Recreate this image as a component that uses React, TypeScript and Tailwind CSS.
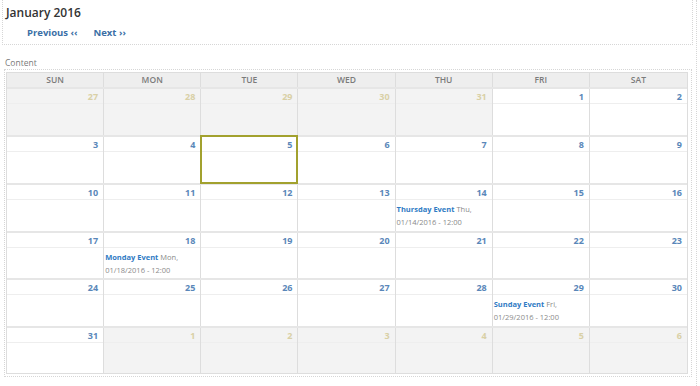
const days = ["SUN", "MON", "TUE", "WED", "THU", "FRI", "SAT"];

type Cell = { day: number; other?: boolean; today?: boolean; event?: { title: string; dow: string; date: string } };

const weeks: Cell[][] = [
  [
    { day: 27, other: true },
    { day: 28, other: true },
    { day: 29, other: true },
    { day: 30, other: true },
    { day: 31, other: true },
    { day: 1 },
    { day: 2 },
  ],
  [{ day: 3 }, { day: 4 }, { day: 5, today: true }, { day: 6 }, { day: 7 }, { day: 8 }, { day: 9 }],
  [
    { day: 10 },
    { day: 11 },
    { day: 12 },
    { day: 13 },
    { day: 14, event: { title: "Thursday Event", dow: "Thu,", date: "01/14/2016 - 12:00" } },
    { day: 15 },
    { day: 16 },
  ],
  [
    { day: 17 },
    { day: 18, event: { title: "Monday Event", dow: "Mon,", date: "01/18/2016 - 12:00" } },
    { day: 19 },
    { day: 20 },
    { day: 21 },
    { day: 22 },
    { day: 23 },
  ],
  [
    { day: 24 },
    { day: 25 },
    { day: 26 },
    { day: 27 },
    { day: 28 },
    { day: 29, event: { title: "Sunday Event", dow: "Fri,", date: "01/29/2016 - 12:00" } },
    { day: 30 },
  ],
  [
    { day: 31 },
    { day: 1, other: true },
    { day: 2, other: true },
    { day: 3, other: true },
    { day: 4, other: true },
    { day: 5, other: true },
    { day: 6, other: true },
  ],
];

// row heights in px, to land on the reference's row lines
const weekHeights = ["h-[48px]", "h-[48px]", "h-[48px]", "h-[47px]", "h-[48px]", "h-[47px]"];

function DayCell({ cell, last }: { cell: Cell; last: boolean }) {
  return (
    <div
      className={`relative flex flex-col ${last ? "" : "border-r border-[#dddddd]"} ${
        cell.other ? "bg-[#f3f3f3]" : "bg-white"
      }`}
    >
      {/* date number */}
      <div
        className={`h-[15px] border-b border-[#eeeeee] pr-[5px] text-right text-[9px] font-bold leading-[15px] ${
          cell.other ? "text-[#d9d0a6]" : "text-[#5a87b9]"
        }`}
      >
        {cell.day}
      </div>

      {/* events */}
      <div className="flex-1 pl-[1px] pt-[3px]">
        {cell.event && (
          <p className="text-[7.5px] leading-[13px] text-[#8a8a8a]">
            <span className="font-bold text-[#2f7bc4]">{cell.event.title}</span> {cell.event.dow}
            <span className="block">{cell.event.date}</span>
          </p>
        )}
      </div>

      {cell.today && <div className="absolute -top-[2px] -left-px -right-px -bottom-px z-10 border-2 border-[#a2a12e]" />}
    </div>
  );
}

export default function App() {
  return (
    <div className="h-[386px] w-[700px] overflow-hidden bg-white font-['Open_Sans',sans-serif]">
      <div className="h-full w-[697px] border-r border-dotted border-[#d6d6d6]">
        {/* Month heading */}
        <div className="ml-[2px] h-[45px] w-[691px] border-x border-b border-dotted border-[#d6d6d6] pl-[3px] pt-[4px]">
          <h1 className="text-[12px] font-semibold leading-[18px] text-[#333333]">January 2016</h1>
          <div className="mt-[4px] flex gap-[16px] pl-[21px] text-[9.5px] font-bold leading-[14px] text-[#3b6fa6]">
            <span>Previous ‹‹</span>
            <span>Next ››</span>
          </div>
        </div>

        <p className="mt-[12px] pl-[5px] text-[8.5px] leading-[12px] text-[#7a7a7a]">Content</p>

        {/* Calendar */}
        <div className="ml-[4px] w-[688px] border border-dotted border-[#d6d6d6] pb-[2px] pl-px pr-[3px] pt-[2px]">
          <div className="w-[682px] border border-[#dddddd]">
            <div className="grid h-[14px] grid-cols-7 bg-[#eeeeee]">
              {days.map((d, i) => (
                <div
                  key={d}
                  className={`text-center text-[8.5px] font-semibold leading-[14px] text-[#7b7b7b] ${
                    i < 6 ? "border-r border-[#dddddd]" : ""
                  }`}
                >
                  {d}
                </div>
              ))}
            </div>

            {weeks.map((week, w) => (
              <div key={w} className={`grid grid-cols-7 border-t-2 border-[#e6e6e6] ${weekHeights[w]}`}>
                {week.map((cell, i) => (
                  <DayCell key={i} cell={cell} last={i === 6} />
                ))}
              </div>
            ))}
          </div>
        </div>
      </div>
    </div>
  );
}
